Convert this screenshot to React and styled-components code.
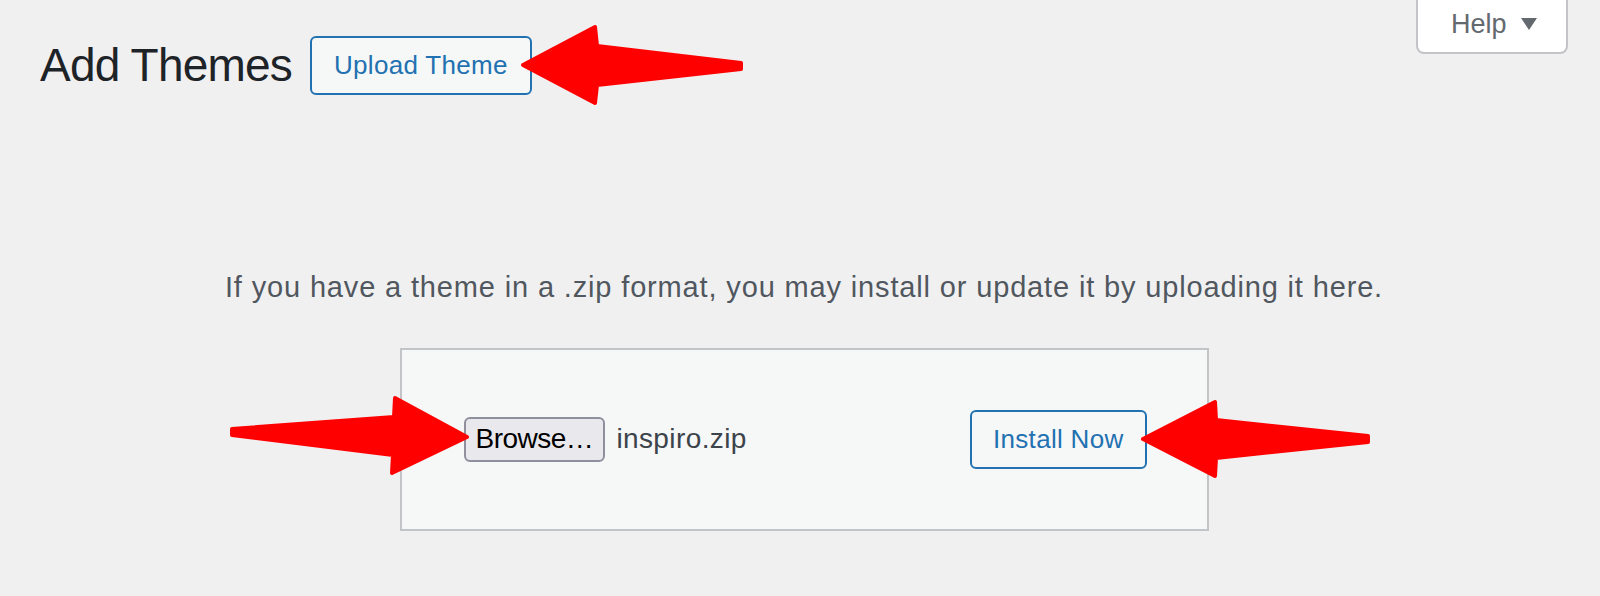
import React from 'react';
import styled, { createGlobalStyle } from 'styled-components';

const GlobalStyle = createGlobalStyle`
  html, body {
    margin: 0;
    padding: 0;
    background: #f0f0f1;
  }
  body {
    font-family: "Liberation Sans", Arial, sans-serif;
    -webkit-font-smoothing: antialiased;
  }
`;

const Page = styled.div`
  position: relative;
  min-height: 596px;
  overflow: hidden;
`;

const Wrap = styled.div`
  padding: 0 32px 0 40px;
`;

const Header = styled.div`
  display: flex;
  justify-content: space-between;
  align-items: flex-start;
`;

const TitleRow = styled.div`
  display: flex;
  align-items: center;
  margin-top: 36px;
`;

const Title = styled.h1`
  margin: 0 18px 0 0;
  font-size: 46px;
  font-weight: 400;
  letter-spacing: -0.8px;
  color: #1d2327;
  line-height: 1.3;
`;

const OutlineButton = styled.button`
  box-sizing: border-box;
  height: 59px;
  padding: 0 ${(p) => p.$pad || 22}px;
  background: #f6f7f7;
  border: 2px solid #2271b1;
  border-radius: 6px;
  color: #2271b1;
  font-family: inherit;
  font-size: 26px;
  letter-spacing: 0.3px;
  cursor: pointer;
`;

const HelpTab = styled.button`
  box-sizing: border-box;
  display: flex;
  align-items: center;
  width: 152px;
  height: 54px;
  padding: 0 0 4px 33px;
  background: #fff;
  border: 2px solid #c3c4c7;
  border-top: 0;
  border-radius: 0 0 8px 8px;
  color: #646970;
  font-family: inherit;
  font-size: 27px;
`;

const Caret = styled.span`
  width: 0;
  height: 0;
  margin-left: 14px;
  border-left: 8.5px solid transparent;
  border-right: 8.5px solid transparent;
  border-top: 12px solid #646970;
`;

const Help = styled.p`
  margin: 170px 0 0;
  font-size: 29px;
  letter-spacing: 0.85px;
  line-height: 42px;
  color: #50575e;
  text-align: center;
`;

const UploadForm = styled.form`
  box-sizing: border-box;
  display: flex;
  justify-content: space-between;
  align-items: center;
  width: 809px;
  margin: 40px auto 0;
  padding: 60px 60px 60px 62px;
  background: #f6f7f7;
  border: 2px solid #c3c4c7;
`;

const FilePicker = styled.div`
  display: flex;
  align-items: center;
  gap: 11px;
`;

const BrowseButton = styled.button`
  box-sizing: border-box;
  height: 45px;
  padding: 0 10px;
  background: #e9e9ed;
  border: 2px solid #8f8f9d;
  border-radius: 6px;
  color: #000;
  font-family: inherit;
  font-size: 28px;
  letter-spacing: -0.5px;
`;

const FileName = styled.span`
  font-size: 28px;
  letter-spacing: 0.4px;
  color: #3c434a;
`;

const Overlay = styled.svg`
  position: absolute;
  top: 0;
  left: 0;
  pointer-events: none;
`;

// annotation arrows drawn on top of the screenshot
const arrows = [
  '523,65 595,27 597,46 741,63 741,69 597,85 595,103',
  '232,429 394,417 395,398 467,437 392,473 393,455 232,435',
  '1143,439 1215,402 1216,420 1368,436 1368,442 1216,458 1215,476',
];

export default function App() {
  return (
    <Page>
      <GlobalStyle />
      <Wrap>
        <Header>
          <TitleRow>
            <Title>Add Themes</Title>
            <OutlineButton>Upload Theme</OutlineButton>
          </TitleRow>
          <HelpTab>
            Help
            <Caret />
          </HelpTab>
        </Header>

        <Help>
          If you have a theme in a .zip format, you may install or update it by uploading it here.
        </Help>

        <UploadForm onSubmit={(e) => e.preventDefault()}>
          <FilePicker>
            <BrowseButton type="button">Browse…</BrowseButton>
            <FileName>inspiro.zip</FileName>
          </FilePicker>
          <OutlineButton type="submit" $pad={21}>Install Now</OutlineButton>
        </UploadForm>
      </Wrap>

      <Overlay width="1600" height="596" viewBox="0 0 1600 596">
        {arrows.map((pts, i) => (
          <polygon
            key={i}
            points={pts}
            fill="#ff0000"
            stroke="#ff0000"
            strokeWidth="4"
            strokeLinejoin="round"
          />
        ))}
      </Overlay>
    </Page>
  );
}
